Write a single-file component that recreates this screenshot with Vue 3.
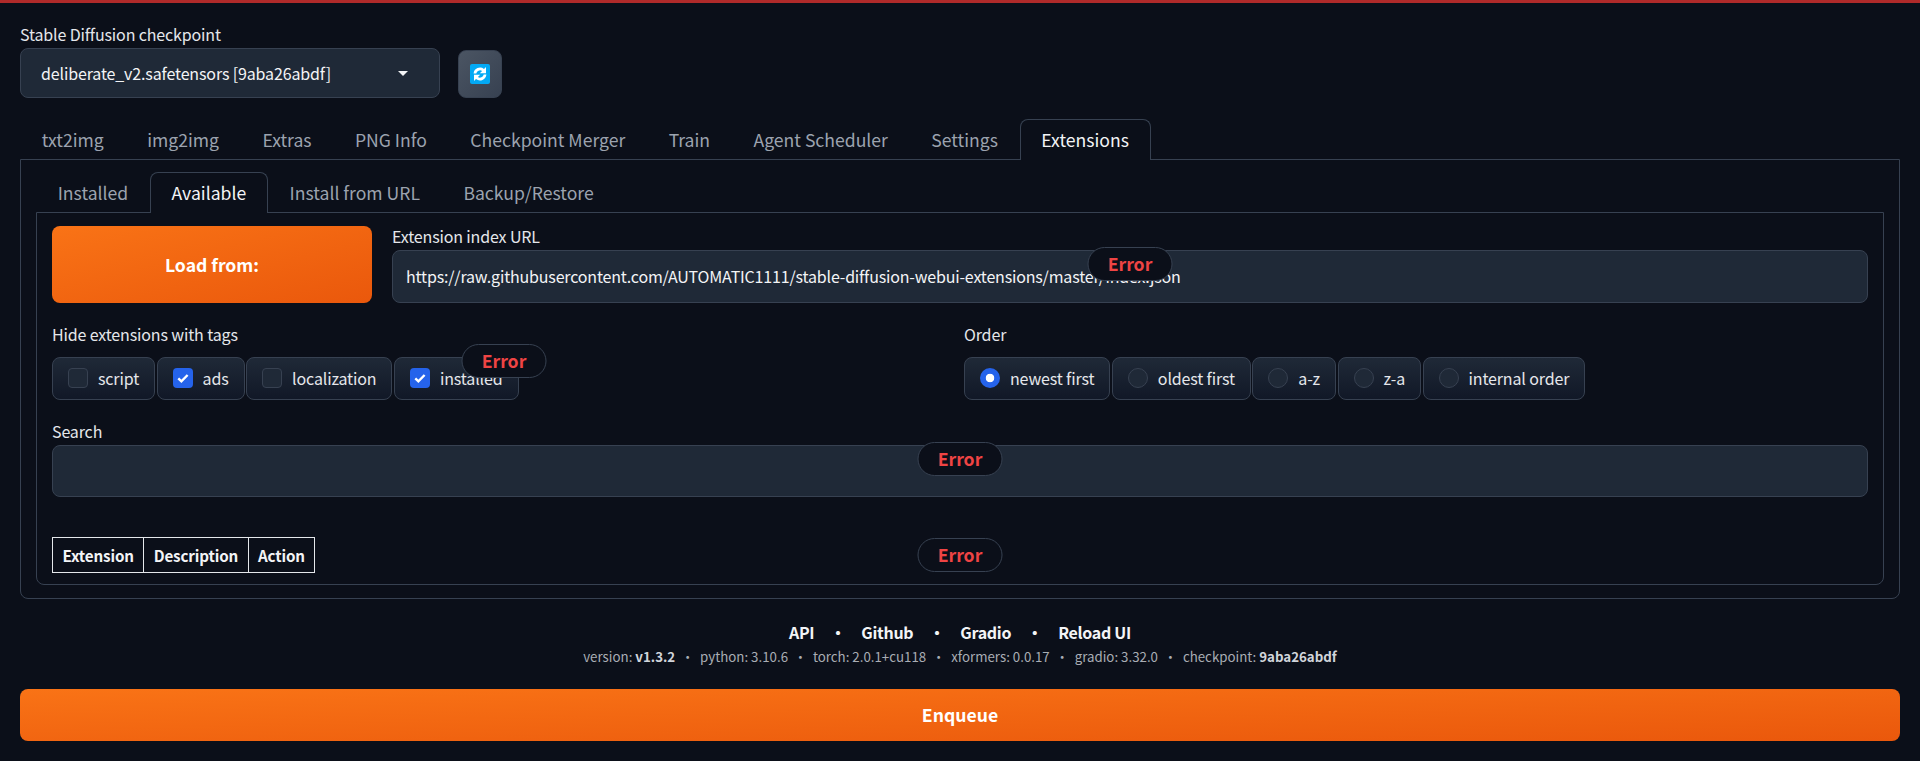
<template>
  <div class="page">
    <div class="top-line"></div>

    <div class="model-row">
      <div class="model-pick">
        <div class="label">Stable Diffusion checkpoint</div>
        <div class="select">
          <span>deliberate_v2.safetensors [9aba26abdf]</span>
          <i class="caret"></i>
        </div>
      </div>
      <button class="refresh">
        <svg width="20" height="20" viewBox="0 0 20 20">
          <rect width="20" height="20" rx="2" fill="#03a9f4" />
          <path d="M3.6 9.4A6.5 6.5 0 0 1 14 4.9L16 3v6.2H9.8l2.3-2.3A3.9 3.9 0 0 0 6.3 9.4z" fill="#fff" />
          <path d="M3.6 9.4A6.5 6.5 0 0 1 14 4.9L16 3v6.2H9.8l2.3-2.3A3.9 3.9 0 0 0 6.3 9.4z" fill="#fff" transform="rotate(180 10 10)" />
        </svg>
      </button>
    </div>

    <div class="tabs main-tabs">
      <div v-for="t in mainTabs" :key="t" class="tab" :class="{ active: t === 'Extensions' }">{{ t }}</div>
    </div>

    <div class="outer-panel">
      <div class="tabs sub-tabs">
        <div v-for="t in subTabs" :key="t" class="tab" :class="{ active: t === 'Available' }">{{ t }}</div>
      </div>

      <div class="inner-panel">
        <div class="load-row">
          <button class="primary load-btn">Load from:</button>
          <div class="url-block">
            <div class="label">Extension index URL</div>
            <div class="input url-input">https://raw.githubusercontent.com/AUTOMATIC1111/stable-diffusion-webui-extensions/master/index.json</div>
            <div class="error-pill err-url">Error</div>
          </div>
        </div>

        <div class="options-row">
          <div class="option-col">
            <div class="label">Hide extensions with tags</div>
            <div class="pills">
              <label v-for="c in tags" :key="c.name" class="pill">
                <span class="check" :class="{ on: c.on }">
                  <svg v-if="c.on" width="20" height="20" viewBox="0 0 20 20">
                    <path d="M5.3 10.3l3.1 3L14.6 7" fill="none" stroke="#fff" stroke-width="2.4" />
                  </svg>
                </span>
                {{ c.name }}
              </label>
            </div>
            <div class="error-pill err-tags">Error</div>
          </div>
          <div class="option-col">
            <div class="label">Order</div>
            <div class="pills">
              <label v-for="r in orders" :key="r" class="pill radio-pill">
                <span class="radio" :class="{ on: r === 'newest first' }"></span>
                {{ r }}
              </label>
            </div>
          </div>
        </div>

        <div class="search-block">
          <div class="label">Search</div>
          <div class="input search-input"></div>
          <div class="error-pill err-search">Error</div>
        </div>

        <div class="table-block">
          <table>
            <thead>
              <tr>
                <th>Extension</th>
                <th>Description</th>
                <th>Action</th>
              </tr>
            </thead>
          </table>
          <div class="error-pill err-table">Error</div>
        </div>
      </div>
    </div>

    <div class="footer-links">
      <template v-for="(l, i) in links" :key="l">
        <span v-if="i > 0" class="dot">•</span>
        <a>{{ l }}</a>
      </template>
    </div>
    <div class="versions">
      version: <b>v1.3.2</b><span class="sep">•</span>python: 3.10.6<span class="sep">•</span>torch: 2.0.1+cu118<span class="sep">•</span>xformers: 0.0.17<span class="sep">•</span>gradio: 3.32.0<span class="sep">•</span>checkpoint: <b>9aba26abdf</b>
    </div>

    <button class="primary enqueue">Enqueue</button>
  </div>
</template>

<script setup>
const mainTabs = ['txt2img', 'img2img', 'Extras', 'PNG Info', 'Checkpoint Merger', 'Train', 'Agent Scheduler', 'Settings', 'Extensions'];
const subTabs = ['Installed', 'Available', 'Install from URL', 'Backup/Restore'];
const tags = [
  { name: 'script', on: false },
  { name: 'ads', on: true },
  { name: 'localization', on: false },
  { name: 'installed', on: true },
];
const orders = ['newest first', 'oldest first', 'a-z', 'z-a', 'internal order'];
const links = ['API', 'Github', 'Gradio', 'Reload UI'];
</script>

<style>
html, body {
  margin: 0;
  background: #0b0f19;
}
</style>

<style scoped>
.page {
  height: 761px;
  box-sizing: border-box;
  padding: 0 20px;
  overflow: hidden;
  background: #0b0f19;
  color: #f3f4f6;
  font-family: "Noto Sans CJK SC", "Noto Sans", sans-serif;
  font-size: 16px;
  letter-spacing: -0.14px;
}

.top-line {
  height: 3px;
  margin: 0 -20px;
  background: #b02a2a;
}

.label {
  font-size: 16px;
  line-height: 20px;
  color: #e5e7eb;
}

.model-row {
  display: flex;
  align-items: flex-end;
  gap: 18px;
  margin-top: 21px;
}

.model-pick {
  width: 420px;
}

.model-pick .label {
  margin-bottom: 4px;
}

.select {
  height: 50px;
  box-sizing: border-box;
  display: flex;
  align-items: center;
  justify-content: space-between;
  padding: 0 31px 0 20px;
  background: #1f2937;
  border: 1px solid #374151;
  border-radius: 8px;
  color: #f3f4f6;
}

.caret {
  width: 0;
  height: 0;
  border-left: 5px solid transparent;
  border-right: 5px solid transparent;
  border-top: 5px solid #f3f4f6;
}

.refresh {
  width: 44px;
  height: 48px;
  padding: 0;
  display: flex;
  align-items: center;
  justify-content: center;
  background: linear-gradient(to bottom right, #4b5563, #374151);
  border: 1px solid #374151;
  border-radius: 8px;
}

.tabs {
  display: flex;
  height: 40px;
  box-sizing: border-box;
}

.main-tabs {
  margin-top: 21px;
}

.tab {
  height: 41px;
  box-sizing: border-box;
  padding: 0 20.7px;
  line-height: 40px;
  font-size: 17.6px;
  letter-spacing: 0;
  color: #9ca3af;
  border: 1px solid transparent;
  border-bottom: none;
  border-radius: 8px 8px 0 0;
  white-space: nowrap;
}

.tab.active {
  color: #f3f4f6;
  border-color: #374151;
  background: #0b0f19;
  position: relative;
  z-index: 1;
}

.outer-panel {
  height: 440px;
  box-sizing: border-box;
  padding: 0 15px;
  border: 1px solid #374151;
  border-radius: 0 0 8px 8px;
}

.sub-tabs {
  margin-top: 12px;
}

.inner-panel {
  height: 373px;
  box-sizing: border-box;
  padding: 13px 15px 0;
  border: 1px solid #374151;
  border-radius: 0 0 8px 8px;
}

.load-row {
  display: flex;
  gap: 20px;
}

.primary {
  border: none;
  color: #fff;
  font-family: inherit;
  font-weight: 600;
  font-size: 17.6px;
  letter-spacing: 0;
  background: linear-gradient(to bottom right, #f97316, #ea580c);
}

.load-btn {
  width: 320px;
  height: 77px;
  border-radius: 8px;
}

.url-block {
  flex: 1;
  position: relative;
}

.url-block .label {
  margin-bottom: 4px;
}

.input {
  box-sizing: border-box;
  background: #1f2937;
  border: 1px solid #374151;
  border-radius: 8px;
  color: #f3f4f6;
}

.url-input {
  height: 53px;
  line-height: 51px;
  padding-left: 13px;
  letter-spacing: -0.175px;
  white-space: nowrap;
}

.error-pill {
  position: absolute;
  left: 50%;
  transform: translateX(-50%);
  width: 85px;
  height: 34px;
  box-sizing: border-box;
  padding-bottom: 2px;
  display: flex;
  align-items: center;
  justify-content: center;
  background: #0b0f19;
  border: 1px solid #374151;
  border-radius: 17px;
  color: #ef4444;
  font-weight: 600;
  font-size: 17.6px;
  letter-spacing: 0;
}

.err-url {
  top: 21px;
}

.err-tags {
  top: 20px;
}

.err-search {
  top: 21px;
}

.err-table {
  top: 1px;
}

.options-row {
  display: flex;
  gap: 8px;
  margin-top: 21px;
}

.option-col {
  flex: 1;
  position: relative;
}

.option-col .label {
  margin-bottom: 13px;
}

.pills {
  display: flex;
  gap: 1.5px;
}

.pill {
  height: 43px;
  box-sizing: border-box;
  padding: 0 15px 1px;
  display: flex;
  align-items: center;
  gap: 10px;
  background: linear-gradient(to top, #111827, #1f2937);
  border: 1px solid #374151;
  border-radius: 8px;
  color: #e5e7eb;
}

.check {
  width: 20px;
  height: 20px;
  box-sizing: border-box;
  background: #1f2937;
  border: 1px solid #374151;
  border-radius: 4px;
}

.check.on {
  background: #2563eb;
  border: none;
}

.check svg {
  display: block;
}

.radio {
  width: 20px;
  height: 20px;
  box-sizing: border-box;
  background: #1f2937;
  border: 1px solid #374151;
  border-radius: 50%;
}

.radio.on {
  background: #2563eb radial-gradient(circle, #fff 0 4px, transparent 4.6px);
  border: none;
}

.search-block {
  position: relative;
  margin-top: 21px;
}

.search-block .label {
  margin-bottom: 4px;
}

.search-input {
  height: 52px;
}

.table-block {
  position: relative;
  margin-top: 40px;
}

table {
  border-collapse: collapse;
  font-size: 15.2px;
  font-weight: 600;
  color: #f3f4f6;
}

th {
  height: 33px;
  padding: 0 9.4px 1px;
  border: 1px solid #e5e7eb;
  line-height: 20px;
}

.footer-links {
  display: flex;
  justify-content: center;
  margin-top: 22px;
  line-height: 22px;
  font-weight: 600;
  letter-spacing: -0.3px;
  color: #f3f4f6;
}

.dot {
  width: 47px;
  text-align: center;
}

.versions {
  margin-top: 4px;
  text-align: center;
  font-size: 13.3px;
  line-height: 20px;
  letter-spacing: 0;
  color: #a9adb4;
}

.versions b {
  color: #d1d5db;
}

.sep {
  margin: 0 5.8px;
}

.enqueue {
  display: block;
  width: 100%;
  height: 52px;
  margin-top: 22px;
  padding-bottom: 2px;
  border-radius: 8px;
}
</style>
